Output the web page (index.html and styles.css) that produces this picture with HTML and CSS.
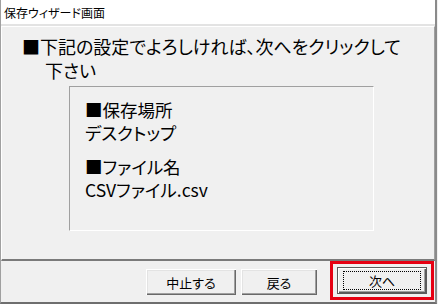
FILE: index.html
```html
<!DOCTYPE html>
<html lang="ja">
<head>
<meta charset="utf-8">
<title>保存ウィザード画面</title>
<link rel="stylesheet" href="styles.css">
</head>
<body>
<div class="window">
  <div class="titlebar">保存ウィザード画面</div>
  <div class="main">
    <div class="lead">
      <div class="lead-line">■下記の設定でよろしければ、次へをクリックして</div>
      <div class="lead-line indent">下さい</div>
    </div>
    <div class="box">
      <div class="group">
        <div class="line">■保存場所</div>
        <div class="line">デスクトップ</div>
      </div>
      <div class="group">
        <div class="line">■ファイル名</div>
        <div class="line">CSVファイル.csv</div>
      </div>
    </div>
  </div>
  <div class="footer">
    <button class="btn btn-cancel">中止する</button>
    <button class="btn btn-back">戻る</button>
    <div class="highlight">
      <button class="btn btn-default"><span class="focus">次へ</span></button>
    </div>
  </div>
</div>
</body>
</html>
```

FILE: styles.css
```css
* { box-sizing: border-box; }
html, body { margin: 0; padding: 0; }
body {
  width: 438px;
  height: 304px;
  background: #f0f0f0;
  font-family: "Noto Sans CJK JP", "Noto Sans", sans-serif;
  font-feature-settings: "palt";
  color: #000;
  overflow: hidden;
}
.window {
  width: 437px;
  height: 304px;
  display: flex;
  flex-direction: column;
  border-left: 1px solid #a0a0a0;
  border-right: 2px solid #8a8a8a;
  border-bottom: 2px solid #6e6e6e;
  background: #f0f0f0;
}
.titlebar {
  height: 26px;
  line-height: 26px;
  background: #fff;
  font-size: 12px;
  padding-left: 3px;
  border-bottom: 2px solid #e3e3e3;
  flex: none;
}
.main {
  height: 235px;
  flex: none;
  border-top: 1px solid #fff;
  border-left: 1px solid #fff;
  border-right: 1px solid #a0a0a0;
  border-bottom: 2px solid #7a7a7a;
  padding: 7px 0 0 20px;
}
.lead {
  font-size: 18px;
  line-height: 24px;
}
.indent { padding-left: 23px; }
.box {
  margin: 4px 0 0 47px;
  width: 305px;
  height: 145px;
  border-top: 1px solid #a0a0a0;
  border-left: 1px solid #a0a0a0;
  border-right: 1px solid #fff;
  border-bottom: 1px solid #fff;
  padding: 11px 0 0 15px;
  display: flex;
  flex-direction: column;
  gap: 11px;
  font-size: 17.5px;
  line-height: 23px;
}
.footer {
  flex: 1;
  display: flex;
  align-items: flex-start;
  padding: 0 1px 0 0;
  justify-content: flex-end;
}
.btn {
  font-family: "Noto Sans CJK JP", "Noto Sans", sans-serif;
  font-feature-settings: "palt";
  font-size: 13px;
  color: #000;
  background: #f0f0f0;
  border: none;
  padding: 0;
  margin: 0;
  box-shadow: inset 1px 1px #fff, inset -1px -1px #696969, inset -2px -2px #a0a0a0, inset 2px 2px #e3e3e3;
}
.btn-cancel {
  width: 90px;
  height: 26px;
  margin-top: 8px;
  margin-right: 5px;
}
.btn-back {
  width: 76px;
  height: 26px;
  margin-top: 8px;
  margin-right: 13px;
}
.highlight {
  width: 104px;
  height: 39px;
  border: 3px solid #e60012;
  padding: 3px 4px;
}
.btn-default {
  width: 90px;
  height: 27px;
  border: 1px solid #5a5a5a;
  box-shadow: inset 1px 1px #fff, inset -1px -1px #5a5a5a, inset -2px -2px #a0a0a0;
  display: flex;
  padding: 3px 5px;
}
.focus {
  flex: 1;
  border: 1px dotted #000;
  display: flex;
  align-items: center;
  justify-content: center;
  line-height: 17px;
}
```
